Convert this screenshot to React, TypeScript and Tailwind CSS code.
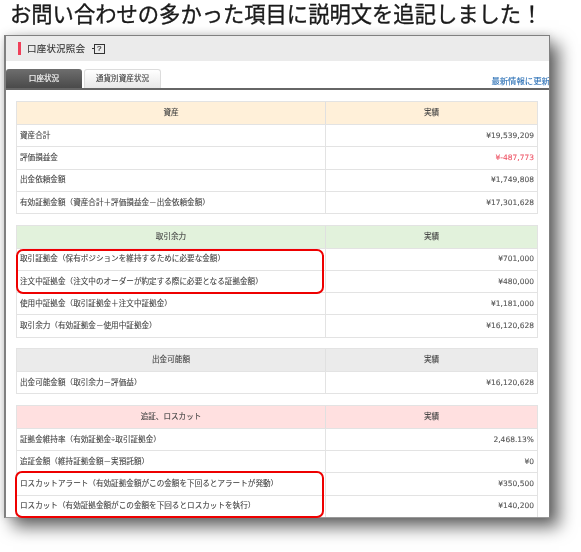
const sans = "font-['Liberation_Sans','Noto_Sans_CJK_JP',sans-serif]";

type Row = { label: string; value: string; red?: boolean };
type Sec = { title: string; head: string; rows: Row[] };

const sections: Sec[] = [
  {
    title: "資産",
    head: "bg-[#fff0d9]",
    rows: [
      { label: "資産合計", value: "¥19,539,209" },
      { label: "評価損益金", value: "¥-487,773", red: true },
      { label: "出金依頼金額", value: "¥1,749,808" },
      { label: "有効証拠金額（資産合計＋評価損益金－出金依頼金額）", value: "¥17,301,628" },
    ],
  },
  {
    title: "取引余力",
    head: "bg-[#e2f2dc]",
    rows: [
      { label: "取引証拠金（保有ポジションを維持するために必要な金額）", value: "¥701,000" },
      { label: "注文中証拠金（注文中のオーダーが約定する際に必要となる証拠金額）", value: "¥480,000" },
      { label: "使用中証拠金（取引証拠金＋注文中証拠金）", value: "¥1,181,000" },
      { label: "取引余力（有効証拠金－使用中証拠金）", value: "¥16,120,628" },
    ],
  },
  {
    title: "出金可能額",
    head: "bg-[#ebebeb]",
    rows: [{ label: "出金可能金額（取引余力－評価益）", value: "¥16,120,628" }],
  },
  {
    title: "追証、ロスカット",
    head: "bg-[#ffe0e0]",
    rows: [
      { label: "証拠金維持率（有効証拠金÷取引証拠金）", value: "2,468.13%" },
      { label: "追証金額（維持証拠金額－実預託額）", value: "¥0" },
      { label: "ロスカットアラート（有効証拠金額がこの金額を下回るとアラートが発動）", value: "¥350,500" },
      { label: "ロスカット（有効証拠金額がこの金額を下回るとロスカットを執行）", value: "¥140,200" },
    ],
  },
];

function Section({ s }: { s: Sec }) {
  return (
    <div className="border border-[#e3e3e3] flex flex-col">
      <div className={`flex h-[22px] items-center text-[#444] ${s.head}`}>
        <div className="w-[309px] text-center border-r border-[#e0e0e0] h-full flex items-center justify-center">{s.title}</div>
        <div className="flex-1 text-center">実績</div>
      </div>
      {s.rows.map((r) => (
        <div key={r.label} className="flex h-[22.25px] items-center border-t border-[#e3e3e3] bg-white text-[#444]">
          <div className="w-[309px] pl-[3px] border-r border-[#e3e3e3] h-full flex items-center whitespace-nowrap">{r.label}</div>
          <div className={`flex-1 text-right pr-[3px] font-['DejaVu_Sans',sans-serif] text-[7.5px] ${r.red ? "text-[#ee5566]" : "text-[#555]"}`}>{r.value}</div>
        </div>
      ))}
    </div>
  );
}

export default function App() {
  return (
    <div className={`relative w-[581px] h-[552px] bg-white overflow-hidden flex flex-col ${sans}`}>
      <h1 className="h-[35px] pl-[10px] text-[21.3px] leading-[26px] text-[#1a1a1a] [-webkit-text-stroke:0.35px_#1a1a1a] whitespace-nowrap font-['Noto_Sans_CJK_JP',sans-serif] blur-[0.3px]">
        お問い合わせの多かった項目に説明文を追記しました！
      </h1>
      <div className="relative ml-[4px] w-[546px] h-[483px] border-t border-l-2 border-r border-b border-t-[#808080] border-l-[#808080] border-r-[#808080] border-b-[#9a9a9a] bg-white shadow-[9px_9px_16px_rgba(0,0,0,0.6),0_0_8px_rgba(0,0,0,0.15)]">
        <div className="absolute inset-0 overflow-hidden text-[7.6px] leading-none blur-[0.25px] [-webkit-text-stroke:0.1px] flex flex-col">
          <div className="h-[25px] bg-[#ebebeb] flex items-center pl-[12px] shrink-0">
            <span className="w-[3px] h-[13px] bg-[#f0405a]" />
            <span className="ml-[6px] text-[9.5px] text-[#333] tracking-[0.2px]">口座状況照会</span>
            <span className="ml-[7px] w-[1.5px] h-[1px] bg-[#333]" />
            <span className="w-[11px] h-[10px] border border-[#333] text-[8px] flex items-center justify-center text-[#222]">?</span>
          </div>
          <div className="h-[8px] shrink-0" />
          <div className="h-[21px] shrink-0 flex items-end border-b-2 border-[#666]">
            <div className="w-[76px] h-[19px] rounded-t-[3px] bg-gradient-to-b from-[#6e6e6e] to-[#4a4a4a] text-white flex items-center justify-center">口座状況</div>
            <div className="ml-[2px] w-[77px] h-[19px] rounded-t-[3px] border border-b-0 border-[#dcdcdc] bg-gradient-to-b from-[#ffffff] to-[#e8e8e8] text-[#444] flex items-center justify-center">通貨別資産状況</div>
            <a className="ml-auto mb-[3px] mr-[-1px] text-[8.4px] text-[#2a6fb5] whitespace-nowrap">最新情報に更新</a>
          </div>
          <div className="pl-[10px] pr-[11px] pt-[11px] flex flex-col gap-[10.5px] shrink-0">
            {sections.map((s) => (
              <Section key={s.title} s={s} />
            ))}
          </div>
        </div>
        <div className="absolute left-[10px] top-[213px] w-[308px] h-[45px] rounded-[7px] border-2 border-[#ee0000]" />
        <div className="absolute left-[9px] top-[435px] w-[309px] h-[47px] rounded-[7px] border-2 border-[#ee0000]" />
      </div>
    </div>
  );
}
